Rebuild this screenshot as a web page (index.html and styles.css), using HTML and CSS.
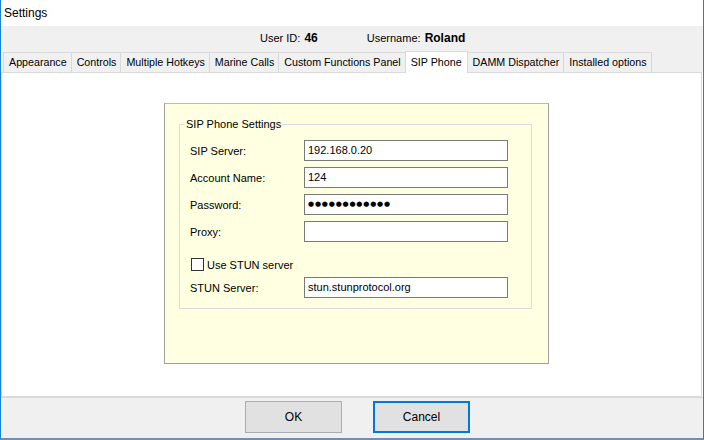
FILE: index.html
```html
<!DOCTYPE html>
<html>
<head>
<meta charset="utf-8">
<title>Settings</title>
<link rel="stylesheet" href="styles.css">
</head>
<body>
<div class="window">
  <div class="titlebar">Settings</div>
  <div class="header">
    <span class="info">User ID: <b>46</b></span>
    <span class="info">Username: <b>Roland</b></span>
  </div>
  <div class="tabstrip">
    <div class="tab">Appearance</div>
    <div class="tab">Controls</div>
    <div class="tab">Multiple Hotkeys</div>
    <div class="tab">Marine Calls</div>
    <div class="tab">Custom Functions Panel</div>
    <div class="tab active">SIP Phone</div>
    <div class="tab">DAMM Dispatcher</div>
    <div class="tab">Installed options</div>
  </div>
  <div class="content">
    <div class="panel">
      <fieldset class="group">
        <legend>SIP Phone Settings</legend>
        <div class="form">
          <div class="label">SIP Server:</div>
          <div class="field">192.168.0.20</div>
          <div class="label">Account Name:</div>
          <div class="field">124</div>
          <div class="label">Password:</div>
          <div class="field dots">●●●●●●●●●●●●</div>
          <div class="label">Proxy:</div>
          <div class="field"></div>
          <div class="check-row"><span class="checkbox"></span><span>Use STUN server</span></div>
          <div class="label">STUN Server:</div>
          <div class="field">stun.stunprotocol.org</div>
        </div>
      </fieldset>
    </div>
  </div>
  <div class="footer">
    <div class="btn">OK</div>
    <div class="btn default">Cancel</div>
  </div>
</div>
</body>
</html>
```

FILE: styles.css
```css
* { box-sizing: border-box; }
html, body { margin: 0; padding: 0; background: #ffffff; }
body {
  width: 704px;
  height: 440px;
  font-family: "Liberation Sans", Arial, sans-serif;
  color: #000;
  overflow: hidden;
}
.window {
  width: 704px;
  height: 440px;
  border-left: 1px solid #1883d7;
  border-right: 1px solid #1883d7;
  border-bottom: 2px solid #6f8fb5;
  display: flex;
  flex-direction: column;
  background: #ffffff;
}
.titlebar {
  height: 26px;
  line-height: 26px;
  padding-left: 3px;
  font-size: 12px;
  background: #ffffff;
  flex: none;
}
.header {
  height: 24px;
  background: #f0f0f0;
  display: flex;
  align-items: center;
  padding-left: 259px;
  gap: 49px;
  font-size: 11px;
  flex: none;
}
.header b {
  font-size: 12px;
  margin-left: 1px;
}
.tabstrip {
  height: 22px;
  background: #f0f0f0;
  display: flex;
  align-items: flex-end;
  padding-left: 2px;
  flex: none;
}
.tab {
  height: 20px;
  line-height: 18px;
  padding: 0 4px 0 5px;
  font-size: 10.7px;
  background: #f0f0f0;
  border: 1px solid #d9d9d9;
  border-bottom: none;
  margin-right: -1px;
}
.tab.active {
  height: 22px;
  line-height: 20px;
  background: #ffffff;
  position: relative;
  z-index: 1;
  margin-bottom: -1px;
  padding: 0 5px 0 5px;
}
.content {
  flex: 1;
  background: #ffffff;
  border: 1px solid #d9d9d9;
  margin-right: 1px;
  padding: 30px 0 0 162px;
}
.panel {
  width: 385px;
  height: 261px;
  background: #ffffe1;
  border: 1px solid #a0a0a0;
  border-top-color: #b9b9b9;
  padding: 13px 16px 0 14px;
}
.group {
  margin: 0;
  border: 1px solid #dcdcdc;
  padding: 9px 10px 10px 10px;
  font-size: 11px;
}
.group legend {
  padding: 0 1px;
  margin-left: -5px;
  line-height: 14px;
}
.form {
  display: grid;
  grid-template-columns: 114px 204px;
  grid-template-rows: 21px 21px 21px 21px 23px 21px;
  row-gap: 6px;
  align-items: center;
}
.label { padding-top: 1px; }
.field {
  height: 21px;
  background: #ffffff;
  border: 1px solid #7a7a7a;
  padding: 0 3px;
  line-height: 19px;
  white-space: nowrap;
  overflow: hidden;
}
.field.dots {
  font-family: "DejaVu Sans", sans-serif;
  font-size: 7px;
  letter-spacing: 0.8px;
  padding-left: 3px;
}
.check-row {
  grid-column: 1 / 3;
  align-self: end;
  display: flex;
  align-items: center;
  margin-left: 1px;
}
.checkbox {
  width: 13px;
  height: 13px;
  border: 1px solid #333333;
  background: #ffffff;
  margin-right: 3px;
}
.footer {
  height: 41px;
  background: #f0f0f0;
  border-top: 1px solid #dadada;
  display: flex;
  align-items: flex-start;
  padding: 3px 0 0 244px;
  gap: 31px;
  flex: none;
}
.btn {
  width: 97px;
  height: 32px;
  background: #e1e1e1;
  border: 1px solid #adadad;
  font-size: 12px;
  display: flex;
  align-items: center;
  justify-content: center;
}
.btn.default {
  border: 2px solid #0078d7;
}
```
